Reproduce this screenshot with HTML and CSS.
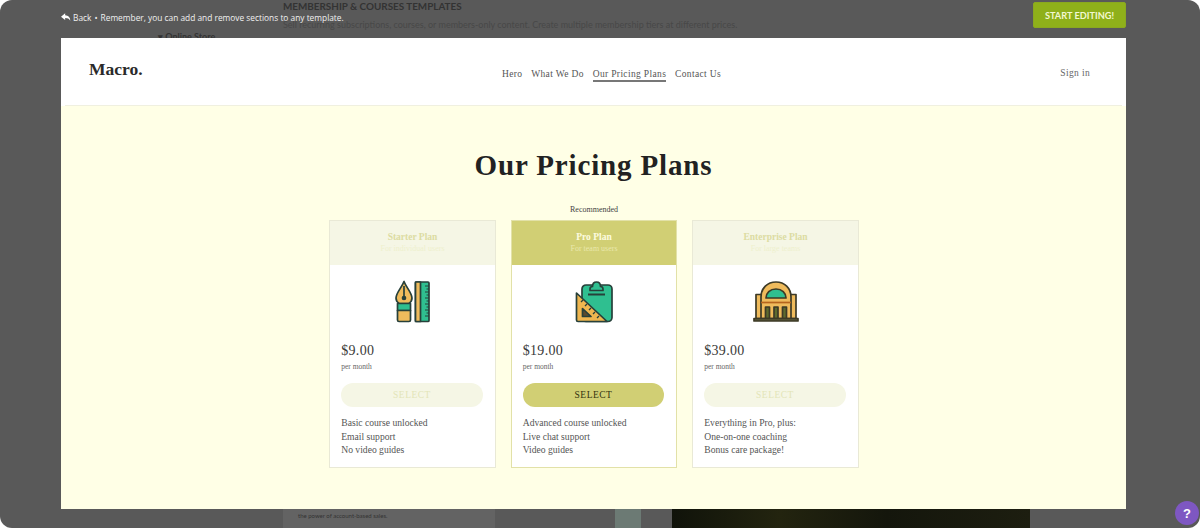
FILE: index.html
```html
<!DOCTYPE html>
<html lang="en">
<head>
    <meta charset="UTF-8">
    <meta name="viewport" content="width=device-width, initial-scale=1.0">
    <title>Our Pricing Plans</title>
    <link rel="stylesheet" href="styles.css">
</head>
<body>
    <div class="window">
        <!-- page behind the overlay -->
        <div class="behind behind-title">MEMBERSHIP &amp; COURSES TEMPLATES</div>
        <div class="behind behind-desc">Sell recurring subscriptions, courses, or members-only content. Create multiple membership tiers at different prices.</div>
        <div class="behind behind-store">&#9662; Online Store</div>
        <div class="behind behind-card">the power of account-based sales.</div>
        <div class="behind behind-strip"></div>
        <div class="behind behind-photo"></div>

        <div class="topbar">
            <div class="topbar-msg">
                <svg class="back-icon" viewBox="0 0 12 10" width="10" height="9"><path d="M5 0 0 4l5 4V5.6c3 0 4.800.8 6.200 3.400C11 5 9 2.600 5 2.400z" fill="#fff"/></svg>
                <span>Back</span>
                <span class="dot">&bull;</span>
                <span>Remember, you can add and remove sections to any template.</span>
            </div>
            <button class="start-btn">START EDITING!</button>
        </div>

        <div class="frame">
            <header class="site-header">
                <div class="logo">Macro.</div>
                <nav class="nav">
                    <a>Hero</a>
                    <a>What We Do</a>
                    <a class="active">Our Pricing Plans</a>
                    <a>Contact Us</a>
                </nav>
                <a class="signin">Sign in</a>
            </header>

            <section class="pricing">
                <h1>Our Pricing Plans</h1>
                <div class="plans">
                    <div class="recommended">Recommended</div>

                    <div class="plan">
                        <div class="plan-head">
                            <div class="plan-name">Starter Plan</div>
                            <div class="plan-for">For individual users</div>
                        </div>
                        <div class="plan-icon">
                            <svg viewBox="0 0 44 44" width="44" height="44">
                                <g stroke="#27403a" stroke-width="1.700" stroke-linejoin="round">
                                    <path d="M13 1.500C11 7 5 13 5 18c0 2 1 4 3 5.500h10c2-1.500 3-3.500 3-5.500 0-5-6-11-8-16.500z" fill="#efbb5c"/>
                                    <path d="M13 6v11" fill="none"/>
                                    <circle cx="13" cy="18" r="1.500" fill="#27403a"/>
                                    <rect x="6.500" y="23.500" width="13" height="7" fill="#2fbf90"/>
                                    <path d="M6.500 30.500h13V40a1.500 1.500 0 0 1-1.500 1.500H8A1.500 1.500 0 0 1 6.500 40z" fill="#efbb5c"/>
                                    <rect x="24.500" y="2" width="13.500" height="39.500" rx="1" fill="#2fbf90"/>
                                    <rect x="24.500" y="2" width="5" height="39.500" fill="#efbb5c"/>
                                </g>
                                <path d="M34 6h4M35.500 9h2.500M34 12h4M35.500 15h2.500M34 18h4M35.500 21h2.500M34 24h4M35.500 27h2.500M34 30h4M35.500 33h2.500M34 36h4" stroke="#27403a" stroke-width="1"/>
                            </svg>
                        </div>
                        <div class="plan-body">
                            <div class="price">$9.00</div>
                            <div class="period">per month</div>
                            <button class="select">SELECT</button>
                            <ul class="features">
                                <li>Basic course unlocked</li>
                                <li>Email support</li>
                                <li>No video guides</li>
                            </ul>
                        </div>
                    </div>

                    <div class="plan featured">
                        <div class="plan-head">
                            <div class="plan-name">Pro Plan</div>
                            <div class="plan-for">For team users</div>
                        </div>
                        <div class="plan-icon">
                            <svg viewBox="0 0 44 44" width="44" height="44">
                                <g stroke="#27403a" stroke-width="1.700" stroke-linejoin="round">
                                    <rect x="10" y="5" width="30" height="36.500" rx="4" fill="#2fbf90"/>
                                    <path d="M18 9c0-1.500.8-2.500 2.500-2.500 0-3 1.500-4.500 4-4.500s4 1.500 4 4.500C30.200 6.500 31 7.500 31 9v1.500H18z" fill="#2fbf90"/>
                                    <path d="M16 14.500h17" fill="none" stroke-width="2"/>
                                    <path d="M4.500 13 35 41.500H6a1.500 1.500 0 0 1-1.500-1.500z" fill="#efb64f"/>
                                    <path d="M10.500 28.500 19 36.500h-8.500z" fill="#5c4b2e"/>
                                </g>
                                <path d="M11 20l-2 2M15 24l-2 2M19 28l-2 2M23 32l-2 2M27 36l-2 2" stroke="#27403a" stroke-width="1.300"/>
                            </svg>
                        </div>
                        <div class="plan-body">
                            <div class="price">$19.00</div>
                            <div class="period">per month</div>
                            <button class="select">SELECT</button>
                            <ul class="features">
                                <li>Advanced course unlocked</li>
                                <li>Live chat support</li>
                                <li>Video guides</li>
                            </ul>
                        </div>
                    </div>

                    <div class="plan">
                        <div class="plan-head">
                            <div class="plan-name">Enterprise Plan</div>
                            <div class="plan-for">For large teams</div>
                        </div>
                        <div class="plan-icon">
                            <svg viewBox="0 0 46 44" width="46" height="44">
                                <g stroke="#3d3a26" stroke-width="1.700" stroke-linejoin="round">
                                    <path d="M3 14.500h6v24H3zM37 14.500h6v24h-6z" fill="#efbb5c"/>
                                    <path d="M8 38.500V17C8 8 14.500 2 23 2s15 6 15 15v21.500z" fill="#efbb5c"/>
                                    <path d="M13 18c0-5 4-9 10-9s10 4 10 9z" fill="#2fbf90"/>
                                    <path d="M8 22.500h30" fill="none" stroke="#b5651d"/>
                                    <rect x="12.500" y="27" width="4" height="11.500" fill="#5e6b2e"/>
                                    <rect x="21" y="27" width="4" height="11.500" fill="#5e6b2e"/>
                                    <rect x="29.500" y="27" width="4" height="11.500" fill="#5e6b2e"/>
                                    <rect x="1" y="38.500" width="44" height="2.500" fill="#5a5a3a"/>
                                </g>
                            </svg>
                        </div>
                        <div class="plan-body">
                            <div class="price">$39.00</div>
                            <div class="period">per month</div>
                            <button class="select">SELECT</button>
                            <ul class="features">
                                <li>Everything in Pro, plus:</li>
                                <li>One-on-one coaching</li>
                                <li>Bonus care package!</li>
                            </ul>
                        </div>
                    </div>
                </div>
            </section>
        </div>

        <button class="help">?</button>
    </div>
</body>
</html>
```

FILE: styles.css
```css
html, body {
    margin: 0;
    padding: 0;
    background-color: #fff;
}

.window {
    position: relative;
    width: 1200px;
    height: 528px;
    overflow: hidden;
    background-color: #595959;
    border-radius: 12px;
    font-family: "Liberation Serif", serif;
}

.behind {
    position: absolute;
    font-family: Lato, sans-serif;
    color: #333;
}

.behind-title {
    left: 283px;
    top: 0;
    font-size: 9.900px;
    font-weight: 700;
}

.behind-desc {
    left: 283px;
    top: 19px;
    font-size: 9px;
    color: #484848;
}

.behind-store {
    left: 158px;
    top: 31px;
    font-size: 9px;
    font-weight: 700;
}

.behind-card {
    left: 283px;
    top: 509px;
    width: 197px;
    height: 19px;
    padding-left: 15px;
    background-color: #636363;
    font-size: 6px;
    line-height: 14px;
}

.behind-strip {
    left: 615px;
    top: 509px;
    width: 26px;
    height: 19px;
    background-color: #6c7a74;
}

.behind-photo {
    left: 672px;
    top: 509px;
    width: 358px;
    height: 19px;
    background: linear-gradient(90deg, #10130a, #23240f 30%, #14160c 60%, #1d1e10);
}

.topbar {
    position: relative;
    display: flex;
    justify-content: space-between;
    height: 38px;
    padding: 2px 74px 0 61px;
    box-sizing: border-box;
}

.topbar-msg {
    display: flex;
    align-items: center;
    gap: 2px;
    height: 26px;
    margin-top: 2px;
    font-family: "Open Sans", sans-serif;
    font-size: 8.350px;
    color: #f0f0f0;
}

.dot {
    margin: 0 1px;
}

.start-btn {
    width: 93px;
    height: 26px;
    padding: 0;
    border: 1px solid #8aa820;
    border-radius: 2px;
    background-color: #8fb01a;
    color: #f2f8d0;
    font-family: Lato, sans-serif;
    font-size: 9.200px;
    font-weight: 700;
}

.frame {
    position: relative;
    width: 1065px;
    height: 471px;
    margin-left: 61px;
    background-color: #ffffe6;
}

.site-header {
    display: flex;
    align-items: center;
    height: 68px;
    margin: 0 4px;
    padding: 0 32px 0 24px;
    box-sizing: border-box;
    background-color: #fff;
    border-bottom: 1px solid #f0f0e0;
    box-shadow: -4px 0 0 #fff, 4px 0 0 #fff;
}

.logo {
    width: 53px;
    margin-top: -5px;
    font-size: 17.500px;
    font-weight: 700;
    color: #2a2a2a;
}

.nav {
    display: flex;
    gap: 8.800px;
    margin-left: 360px;
    margin-top: 8px;
}

.nav a {
    padding-bottom: 1px;
    border-bottom: 2px solid transparent;
    font-size: 9.500px;
    letter-spacing: 0.350px;
    color: #555;
}

.nav a.active {
    border-bottom-color: #777;
}

.signin {
    margin-left: auto;
    margin-top: 3px;
    font-size: 9.500px;
    letter-spacing: 0.350px;
    color: #666;
}

.pricing {
    padding-top: 42px;
}

h1 {
    margin: 0;
    text-align: center;
    font-size: 29px;
    line-height: 34px;
    letter-spacing: 0.850px;
    color: #222;
}

.plans {
    display: grid;
    grid-template-columns: repeat(3, 166.500px);
    gap: 0 15px;
    justify-content: center;
    margin-top: 22px;
    margin-left: 1px;
}

.recommended {
    grid-column: 1 / -1;
    height: 16px;
    text-align: center;
    font-size: 8px;
    line-height: 11px;
    color: #444;
}

.plan {
    height: 248px;
    box-sizing: border-box;
    background-color: #fff;
    border: 1px solid #e9e9d6;
}

.plan-head {
    height: 44px;
    padding-top: 11px;
    box-sizing: border-box;
    background-color: #f5f6e5;
    text-align: center;
    color: #dcdca2;
}

.plan-name {
    font-size: 9.500px;
    font-weight: 700;
    line-height: 11px;
}

.plan-for {
    font-size: 8px;
    line-height: 11px;
    color: #eef0cd;
}

.plan-icon {
    display: flex;
    justify-content: center;
    height: 45px;
    padding-top: 15px;
}

.plan-body {
    padding: 17px 12px 0 11px;
}

.price {
    font-size: 14px;
    line-height: 18px;
    letter-spacing: 0.300px;
    color: #3a3a3a;
}

.period {
    margin-top: 2px;
    font-size: 7.500px;
    line-height: 10px;
    color: #666;
}

.select {
    display: block;
    width: 100%;
    height: 24px;
    margin-top: 11px;
    padding: 0;
    border: none;
    border-radius: 12px;
    background-color: #f5f6e5;
    color: #e3e5b8;
    font-family: "Liberation Serif", serif;
    font-size: 9.500px;
    letter-spacing: 0.500px;
}

.features {
    margin: 9px 0 0;
    padding: 0;
    list-style: none;
    font-size: 9.600px;
    line-height: 13.500px;
    color: #555;
}

.featured {
    border-color: #e2e1a8;
}

.featured .plan-head {
    background-color: #d1cf74;
    color: #fdfce0;
}

.featured .plan-for {
    color: #e9e8ac;
}

.featured .select {
    background-color: #d1cf74;
    color: #33330f;
}

.help {
    position: absolute;
    right: 1px;
    top: 501px;
    width: 24px;
    height: 24px;
    padding: 0;
    border: none;
    border-radius: 50%;
    background-color: #7e57c2;
    color: #fff;
    font-family: "Liberation Sans", sans-serif;
    font-size: 13px;
    font-weight: 700;
}
```
